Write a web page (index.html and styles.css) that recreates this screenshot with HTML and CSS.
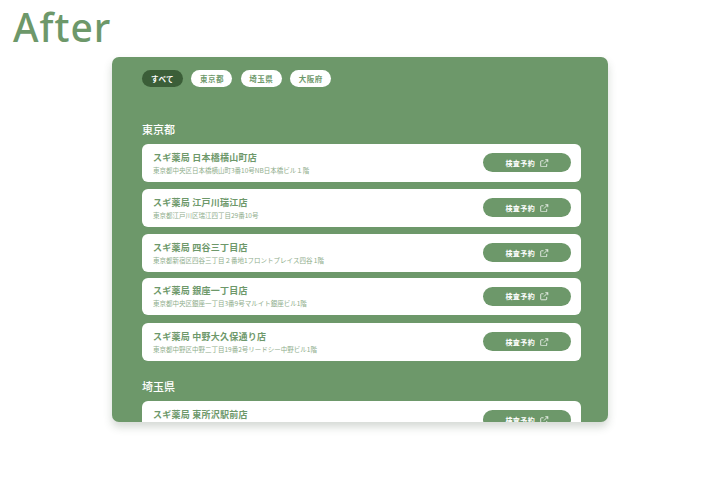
FILE: index.html
```html
<!DOCTYPE html>
<html lang="ja">
<head>
    <meta charset="UTF-8">
    <title>After</title>
    <link rel="stylesheet" href="styles.css">
</head>
<body>
    <h1 class="heading">After</h1>

    <main class="panel">
        <div class="chips">
            <a href="#" class="chip chip-active">すべて</a>
            <a href="#" class="chip">東京都</a>
            <a href="#" class="chip">埼玉県</a>
            <a href="#" class="chip">大阪府</a>
        </div>

        <section class="area">
            <h2 class="area-title">東京都</h2>
            <div class="store">
                <div class="store-info">
                    <h3 class="store-name">スギ薬局 日本橋横山町店</h3>
                    <p class="store-address">東京都中央区日本橋横山町3番10号NB日本橋ビル１階</p>
                </div>
                <a href="#" class="reserve">検査予約
                    <svg class="reserve-icon" viewBox="0 0 12 12"><path d="M5 2.500H2a1 1 0 0 0-1 1V10a1 1 0 0 0 1 1h6.500a1 1 0 0 0 1-1V7M7.500 1H11V4.500M11 1 5.500 6.500"/></svg>
                </a>
            </div>
            <div class="store">
                <div class="store-info">
                    <h3 class="store-name">スギ薬局 江戸川瑞江店</h3>
                    <p class="store-address">東京都江戸川区瑞江四丁目29番10号</p>
                </div>
                <a href="#" class="reserve">検査予約
                    <svg class="reserve-icon" viewBox="0 0 12 12"><path d="M5 2.500H2a1 1 0 0 0-1 1V10a1 1 0 0 0 1 1h6.500a1 1 0 0 0 1-1V7M7.500 1H11V4.500M11 1 5.500 6.500"/></svg>
                </a>
            </div>
            <div class="store">
                <div class="store-info">
                    <h3 class="store-name">スギ薬局 四谷三丁目店</h3>
                    <p class="store-address">東京都新宿区四谷三丁目２番地1フロントプレイス四谷 1階</p>
                </div>
                <a href="#" class="reserve">検査予約
                    <svg class="reserve-icon" viewBox="0 0 12 12"><path d="M5 2.500H2a1 1 0 0 0-1 1V10a1 1 0 0 0 1 1h6.500a1 1 0 0 0 1-1V7M7.500 1H11V4.500M11 1 5.500 6.500"/></svg>
                </a>
            </div>
            <div class="store store-tight">
                <div class="store-info">
                    <h3 class="store-name">スギ薬局 銀座一丁目店</h3>
                    <p class="store-address">東京都中央区銀座一丁目3番9号マルイト銀座ビル1階</p>
                </div>
                <a href="#" class="reserve">検査予約
                    <svg class="reserve-icon" viewBox="0 0 12 12"><path d="M5 2.500H2a1 1 0 0 0-1 1V10a1 1 0 0 0 1 1h6.500a1 1 0 0 0 1-1V7M7.500 1H11V4.500M11 1 5.500 6.500"/></svg>
                </a>
            </div>
            <div class="store">
                <div class="store-info">
                    <h3 class="store-name">スギ薬局 中野大久保通り店</h3>
                    <p class="store-address">東京都中野区中野二丁目19番2号リードシー中野ビル1階</p>
                </div>
                <a href="#" class="reserve">検査予約
                    <svg class="reserve-icon" viewBox="0 0 12 12"><path d="M5 2.500H2a1 1 0 0 0-1 1V10a1 1 0 0 0 1 1h6.500a1 1 0 0 0 1-1V7M7.500 1H11V4.500M11 1 5.500 6.500"/></svg>
                </a>
            </div>
        </section>

        <section class="area">
            <h2 class="area-title area-title-wide">埼玉県</h2>
            <div class="store">
                <div class="store-info">
                    <h3 class="store-name">スギ薬局 東所沢駅前店</h3>
                    <p class="store-address"></p>
                </div>
                <a href="#" class="reserve">検査予約
                    <svg class="reserve-icon" viewBox="0 0 12 12"><path d="M5 2.500H2a1 1 0 0 0-1 1V10a1 1 0 0 0 1 1h6.500a1 1 0 0 0 1-1V7M7.500 1H11V4.500M11 1 5.500 6.500"/></svg>
                </a>
            </div>
        </section>
    </main>
</body>
</html>
```

FILE: styles.css
```css
body {
    font-family: "Noto Sans CJK JP", "Noto Sans", sans-serif;
    margin: 0;
    height: 480px;
    overflow: hidden;
    background-color: #ffffff;
    color: #6d986a;
}
.heading {
    font-family: "Noto Sans", sans-serif;
    font-size: 39px;
    font-weight: 500;
    line-height: 40px;
    letter-spacing: 1px;
    margin: 0;
    padding: 7px 0 10px 13px;
}
.panel {
    box-sizing: border-box;
    width: 496px;
    height: 365px;
    margin-left: 112px;
    padding: 13px 27px 0 30px;
    overflow: hidden;
    background-color: #6d986a;
    border-radius: 7px;
    box-shadow: 0 5px 9px rgba(60, 80, 60, 0.22);
}
.chips {
    display: flex;
    gap: 8.400px;
}
.chip {
    width: 41px;
    height: 17px;
    line-height: 17px;
    text-align: center;
    font-size: 7.500px;
    font-weight: 700;
    letter-spacing: 0.500px;
    color: #6d986a;
    background-color: #ffffff;
    border-radius: 9px;
    text-decoration: none;
}
.chip-active {
    color: #ffffff;
    background-color: #3b5e38;
}
.area {
    margin-top: 34px;
}
.area + .area {
    margin-top: 17px;
}
.area-title {
    font-size: 11px;
    font-weight: 500;
    line-height: 16px;
    margin: 0 0 7px;
    color: #ffffff;
}
.area-title-wide {
    margin-bottom: 7.500px;
}
.store {
    display: flex;
    align-items: center;
    justify-content: space-between;
    box-sizing: border-box;
    height: 37.500px;
    margin-bottom: 7.500px;
    padding: 0 10px 0 11px;
    background-color: #ffffff;
    border-radius: 6px;
}
.store-tight {
    margin-top: -1.500px;
    margin-bottom: 8px;
}
.store-name {
    font-size: 9px;
    font-weight: 700;
    line-height: 13px;
    letter-spacing: 0.250px;
    margin: 0;
}
.store-address {
    font-size: 6.500px;
    line-height: 9px;
    min-height: 9px;
    margin: 2px 0 0;
    color: #8fae8c;
}
.reserve {
    display: flex;
    align-items: center;
    justify-content: center;
    gap: 5px;
    width: 88px;
    height: 19px;
    font-size: 7px;
    font-weight: 700;
    letter-spacing: 0.400px;
    color: #ffffff;
    background-color: #6d986a;
    border-radius: 10px;
    text-decoration: none;
}
.reserve-icon {
    width: 8.500px;
    height: 8.500px;
    fill: none;
    stroke: #ffffff;
    stroke-width: 1.100;
}
```
